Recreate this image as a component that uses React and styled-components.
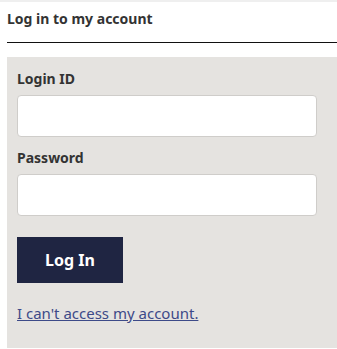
import React from 'react'
import styled, { createGlobalStyle } from 'styled-components'

const GlobalStyle = createGlobalStyle`
  body {
    margin: 0;
    background: #fff;
    font-family: "Noto Sans", Arial, sans-serif;
  }
`;

const TopStrip = styled.div`
  height: 2px;
  background: #efefef;
`;

const Container = styled.div`
  padding-left: 7px;
  padding-bottom: 5px;
`;

const Header = styled.div`
  height: 41px;
  border-bottom: 1px solid #111;
  box-sizing: border-box;
  display: flex;
  align-items: flex-start;
`;

const Title = styled.h2`
  margin: 7px 0 0;
  font-size: 14px;
  font-weight: 700;
  color: #333;
  line-height: 20px;
`;

const Panel = styled.form`
  margin-top: 14px;
  background: #e5e3e0;
  padding: 12px 20px 25px 10px;
  display: flex;
  flex-direction: column;
`;

const Label = styled.label`
  font-size: 14px;
  font-weight: 700;
  color: #333;
  line-height: 20px;
  margin-bottom: ${p => p.$gap}px;
`;

const Input = styled.input`
  height: 42px;
  box-sizing: border-box;
  border: 1px solid #cfcdca;
  border-radius: 4px;
  background: #fff;
  margin-bottom: ${p => p.$gap}px;
  font: inherit;
`;

const Button = styled.button`
  width: 106px;
  height: 46px;
  border: none;
  background: #1f2542;
  color: #fff;
  font-family: inherit;
  font-size: 16px;
  font-weight: 700;
  margin-bottom: 20px;
  cursor: pointer;
`;

const Link = styled.a`
  font-size: 15px;
  color: #3d4a88;
  text-decoration: underline;
  line-height: 20px;
  align-self: flex-start;
`;

const App = () => {
  return (
    <>
      <GlobalStyle />
      <TopStrip />
      <Container>
        <Header>
          <Title>Log in to my account</Title>
        </Header>
        <Panel onSubmit={e => e.preventDefault()}>
          <Label $gap={6}>Login ID</Label>
          <Input type="text" $gap={11} />
          <Label $gap={6}>Password</Label>
          <Input type="password" $gap={21} />
          <Button type="submit">Log In</Button>
          <Link href="#">I can't access my account.</Link>
        </Panel>
      </Container>
    </>
  )
}

export default App
